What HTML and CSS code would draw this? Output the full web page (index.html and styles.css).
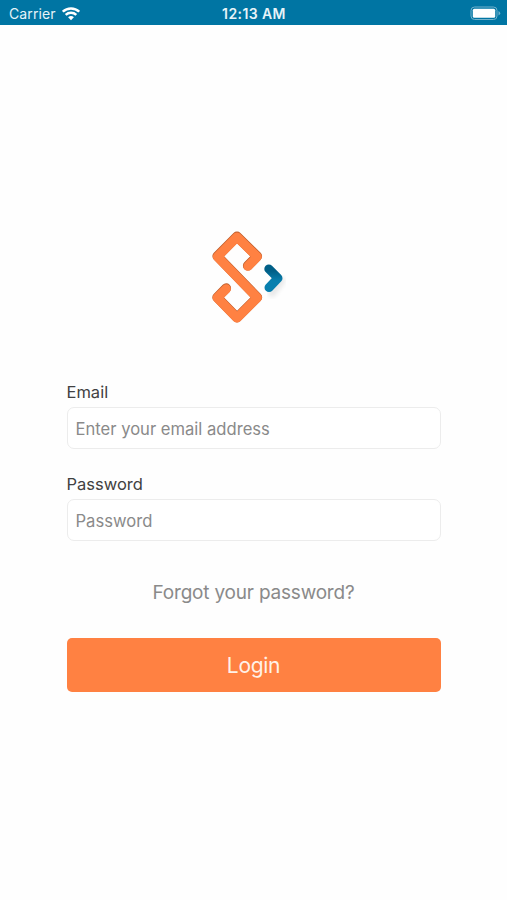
FILE: index.html
```
<!DOCTYPE html>
<html lang="en">
<head>
    <meta charset="UTF-8">
    <meta name="viewport" content="width=device-width, initial-scale=1.0">
    <title>Login</title>
    <link rel="stylesheet" href="styles.css">
</head>
<body>
    <header class="status-bar">
        <div class="carrier">
            <span>Carrier</span>
            <svg class="wifi" width="18" height="14" viewBox="0 0 18 14" fill="none" stroke="#fff" stroke-width="2.5">
                <path d="M.8 4.7C5.3 .3 12.7 .3 17.2 4.7"/>
                <path d="M3.7 7.8C6.7 5 11.3 5 14.3 7.8"/>
                <path d="M6.1 10.2C7.8 8.7 10.2 8.7 11.9 10.2L9 13.2Z" fill="#fff" stroke="none"/>
            </svg>
        </div>
        <div class="time">12:13 AM</div>
        <svg class="battery" width="31" height="15" viewBox="0 0 31 15">
            <rect x="1" y="1" width="26" height="12.5" rx="3.5" fill="none" stroke="#73b3cd"/>
            <rect x="2.8" y="2.7" width="22.4" height="9.1" rx="1.5" fill="#fff"/>
            <path d="M28.5 5v4.5q1.7-.7 1.7-2.25T28.5 5Z" fill="#73b3cd"/>
        </svg>
    </header>

    <main class="container">
        <svg class="logo" width="100" height="110" viewBox="0 0 100 110" fill="none" stroke-linecap="round" stroke-linejoin="round">
            <defs>
                <linearGradient id="blue" x1="0" y1="42" x2="0" y2="70" gradientUnits="userSpaceOnUse">
                    <stop offset=".25" stop-color="#005f87"/>
                    <stop offset=".6" stop-color="#087fae"/>
                </linearGradient>
                <filter id="soft" x="-50%" y="-50%" width="200%" height="200%">
                    <feGaussianBlur stdDeviation="2"/>
                </filter>
            </defs>
            <path d="M81 59 72 71" stroke="#e9e9e9" stroke-width="8" filter="url(#soft)"/>
            <path class="s-shade" d="M47.8 43.7 57.2 34.2 37 14.4 17.3 34.2 57.3 75.4 37 95.6 17.2 75.4 26.2 66.2"/>
            <path class="s-line" d="M48 44.2 57.2 34.8 37 15 17.5 34.7 57.3 75.8 37 96 17.2 75.8 26.3 66.9"/>
            <path d="M68.8 46.9 78 56.2 69 65.6" stroke="url(#blue)" stroke-width="9"/>
        </svg>

        <form class="login-form">
            <label for="email">Email</label>
            <input type="email" id="email" placeholder="Enter your email address">
            <label for="password">Password</label>
            <input type="password" id="password" placeholder="Password">
            <a class="forgot">Forgot your password?</a>
            <button type="button">Login</button>
        </form>
    </main>
</body>
</html>
```
FILE: styles.css
```
* {
    box-sizing: border-box;
}

body {
    margin: 0;
    min-height: 100vh;
    background-color: #fefefe;
    font-family: Inter, "Liberation Sans", sans-serif;
    color: #414141;
}

.status-bar {
    display: grid;
    grid-template-columns: 1fr auto 1fr;
    align-items: center;
    height: 25px;
    padding: 2px 6px 0 9px;
    background-color: #0075a3;
    color: #e6f3f8;
    font-size: 14px;
}

.carrier {
    display: flex;
    align-items: center;
    gap: 6px;
    letter-spacing: 0.1px;
}

.time {
    margin-right: 2px;
    font-weight: 600;
    letter-spacing: 0.4px;
}

.battery {
    justify-self: end;
}

.container {
    display: flex;
    flex-direction: column;
    align-items: center;
    padding-top: 197px;
}

.logo {
    margin-right: 7px;
}

.s-shade {
    stroke: #bd5c2b;
    stroke-width: 9.8px;
}

.s-line {
    stroke: #ff8142;
    stroke-width: 9.2px;
}

.login-form {
    display: flex;
    flex-direction: column;
    width: 374px;
    margin-top: 50px;
}

label {
    height: 25px;
    font-size: 16.5px;
    line-height: 21px;
}

input {
    height: 42px;
    margin-bottom: 25px;
    padding: 1px 8px 0;
    border: 1px solid #ececec;
    border-radius: 7px;
    background-color: #fff;
    font-family: inherit;
    font-size: 16.6px;
}

input::placeholder {
    color: #8a8a8a;
}

.forgot {
    margin-top: 15px;
    color: #8a8a8a;
    font-size: 19px;
    line-height: 24px;
    letter-spacing: -0.2px;
    text-align: center;
}

button {
    height: 54px;
    margin-top: 33px;
    padding: 0;
    border: none;
    border-radius: 5px;
    background-color: #ff8142;
    color: #fff2e8;
    font-family: inherit;
    font-size: 21px;
    letter-spacing: -0.3px;
}
```
